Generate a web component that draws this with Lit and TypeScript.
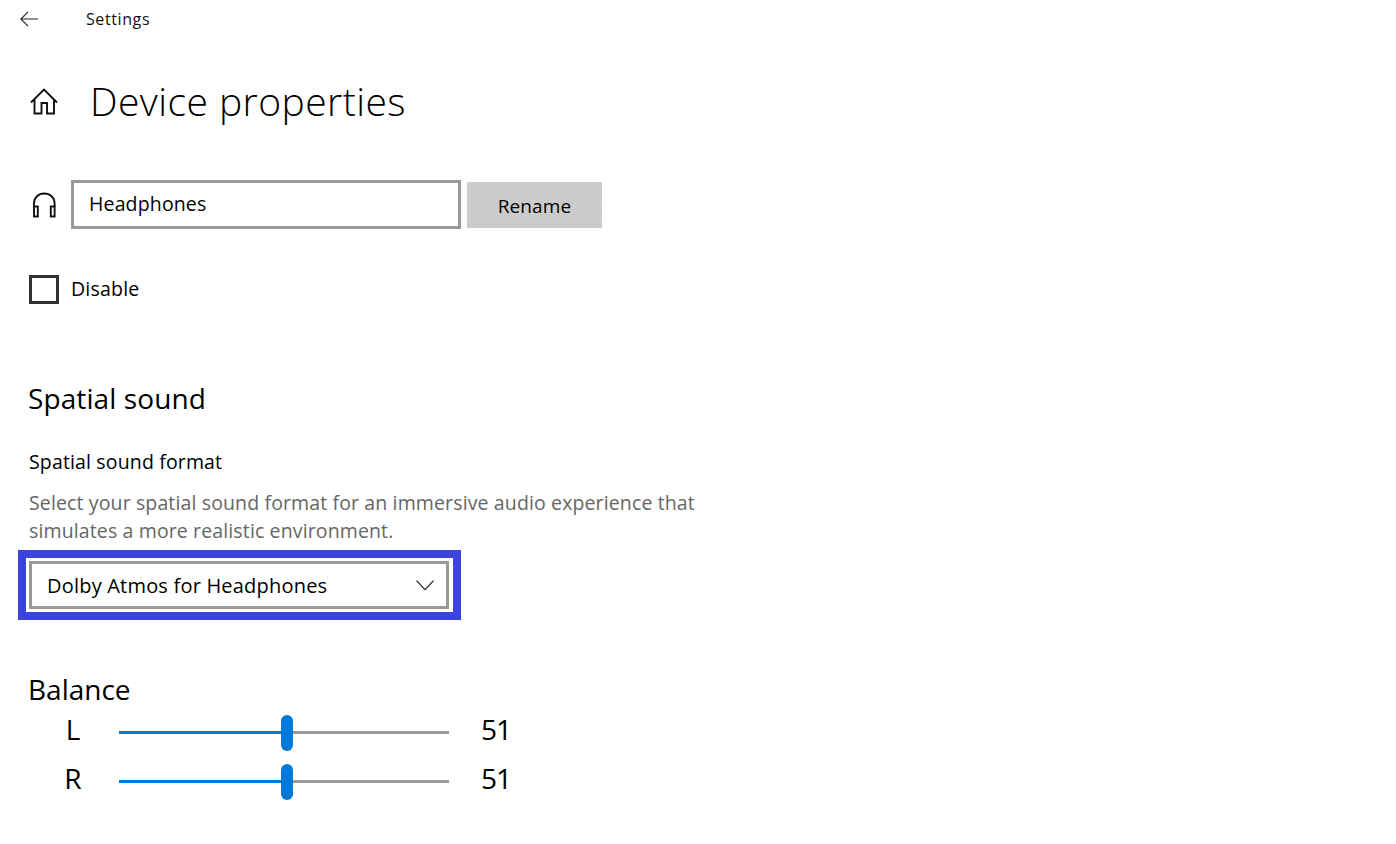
import { LitElement, html, css } from "lit";
import { customElement } from "lit/decorators.js";

@customElement("app-root")
export class AppRoot extends LitElement {
  static styles = css`
    :host { display: block; height: 844px; overflow: hidden; background: #fff; color: #000; font-family: "Open Sans", "Noto Sans", sans-serif; }
    .page { display: flex; flex-direction: column; }
    .topbar { height: 38px; display: flex; align-items: center; padding-left: 20px; }
    .back { width: 18px; height: 16px; margin-right: 48px; display: block; }
    .settings { font-size: 16px; letter-spacing: 0.6px; color: #111; }
    .titlerow { height: 50px; margin-top: 38px; display: flex; align-items: center; padding-left: 30px; }
    .home { width: 28px; height: 28px; margin-right: 33px; display: block; margin-top: 2px; }
    h1 { margin: 0; font-size: 39px; font-weight: 300; line-height: 50px; letter-spacing: 0.45px; margin-left: -1px; }
    .namerow { margin-top: 54px; height: 49px; display: flex; align-items: center; padding-left: 30px; }
    .phones { width: 28px; height: 28px; margin-right: 13px; display: block; }
    .input { box-sizing: border-box; width: 390px; height: 49px; border: 3px solid #999; padding-left: 15px; display: flex; align-items: center; font-size: 19.5px; letter-spacing: 0.15px; padding-bottom: 2px; }
    .btn { box-sizing: border-box; width: 135px; height: 46px; margin-left: 6px; background-color: #ccc; background-image: radial-gradient(circle, #c6c6c6 0.6px, transparent 0.7px); background-size: 4px 5px; display: flex; align-items: center; justify-content: center; font-size: 19px; letter-spacing: 0.1px; padding-top: 3px; }
    .checkrow { margin-top: 45px; height: 30px; display: flex; align-items: center; padding-left: 29px; }
    .box { box-sizing: border-box; width: 30px; height: 29px; border: 3px solid #333; margin-right: 12px; }
    .checkrow span { font-size: 19.5px; letter-spacing: 0.2px; margin-top: -2px; }
    h2 { margin: 0; font-weight: 400; font-size: 28px; line-height: 38px; letter-spacing: 0.1px; }
    .spatial { margin: 75px 0 0 28px; }
    .label { margin: 31px 0 0 29px; font-size: 19.5px; line-height: 28px; letter-spacing: 0.15px; }
    .desc { margin: 13px 0 0 29px; width: 700px; font-size: 19.5px; line-height: 28px; letter-spacing: 0.13px; color: #666; }
    .focus { box-sizing: border-box; margin: 5px 0 0 18px; width: 443px; height: 70px; border: 8px solid #3d43dd; padding: 3px 4px 3px 3px; }
    .select { box-sizing: border-box; height: 48px; border: 3px solid #999; display: flex; align-items: center; justify-content: space-between; padding: 0 12px 0 15px; font-size: 20px; letter-spacing: 0.2px; }
    .chev { width: 18px; height: 11px; display: block; }
    .balance { margin: 50px 0 0 28px; letter-spacing: 0; }
    .sliders { margin: -2px 0 0 29px; display: flex; flex-direction: column; }
    .srow { height: 49px; display: grid; grid-template-columns: 90px 330px auto; align-items: center; }
    .ch { font-size: 28px; text-align: center; width: 88px; margin-bottom: 4px; }
    .track { height: 3px; background: #999; position: relative; margin-top: 3px; }
    .fill { height: 100%; background: #0078d7; }
    .thumb { position: absolute; top: -16px; width: 12px; height: 36px; border-radius: 6px; background: #0078d7; transform: translateX(-6px); }
    .val { font-size: 28px; margin-left: 32px; letter-spacing: -1px; margin-bottom: 4px; }
  `;

  private slider(ch: string, v: number) {
    return html`<div class="srow">
      <div class="ch">${ch}</div>
      <div class="track">
        <div class="fill" style="width:${v}%"></div>
        <div class="thumb" style="left:${v}%"></div>
      </div>
      <div class="val">${v}</div>
    </div>`;
  }

  render() {
    return html`<div class="page">
      <div class="topbar">
        <svg class="back" viewBox="0 0 18 16" fill="none" stroke="#222" stroke-width="1.1"><path d="M8 .8 .8 8l7.2 7.2M.8 8H18"/></svg>
        <span class="settings">Settings</span>
      </div>
      <div class="titlerow">
        <svg class="home" viewBox="0 0 28 28" fill="none" stroke="#111" stroke-width="1.9"><path d="M1 14.500 14 1.500 27 14.500M4.500 11.500V25.500H11.500V15H17V25.500H24V11.500"/></svg>
        <h1>Device properties</h1>
      </div>
      <div class="namerow">
        <svg class="phones" viewBox="0 0 28 28" fill="none" stroke="#111" stroke-width="1.9"><path d="M4 16V12.500C4 6.500 8.500 2.500 14.300 2.500S24.600 6.500 24.600 12.500V16"/><rect x="4" y="15.500" width="3.800" height="10"/><rect x="20.800" y="15.500" width="3.800" height="10"/></svg>
        <div class="input">Headphones</div>
        <div class="btn">Rename</div>
      </div>
      <div class="checkrow"><div class="box"></div><span>Disable</span></div>
      <h2 class="spatial">Spatial sound</h2>
      <div class="label">Spatial sound format</div>
      <div class="desc">Select your spatial sound format for an immersive audio experience that simulates a more realistic environment.</div>
      <div class="focus">
        <div class="select">
          <span>Dolby Atmos for Headphones</span>
          <svg class="chev" viewBox="0 0 18 11" fill="none" stroke="#222" stroke-width="1.2"><path d="M.5 .7 9 9.700 17.500 .7"/></svg>
        </div>
      </div>
      <h2 class="balance">Balance</h2>
      <div class="sliders">
        ${this.slider("L", 51)}
        ${this.slider("R", 51)}
      </div>
    </div>`;
  }
}
